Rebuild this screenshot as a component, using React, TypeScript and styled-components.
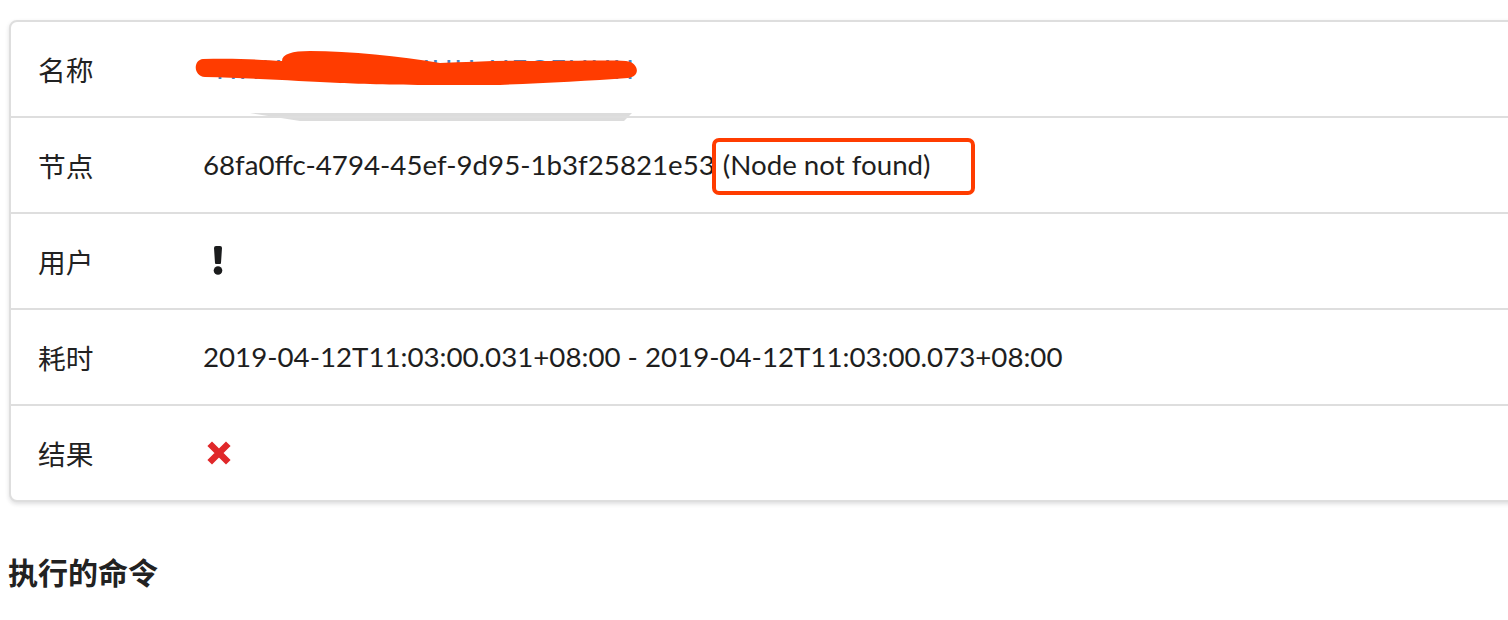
import React from "react";
import styled, { createGlobalStyle } from "styled-components";

const GlobalStyle = createGlobalStyle`
  html, body {
    margin: 0;
    padding: 0;
    background: #fff;
    overflow: hidden;
  }
  body {
    font-family: Lato, "Noto Sans CJK SC", sans-serif;
    color: rgba(0, 0, 0, 0.87);
  }
`;

const Page = styled.div`
  padding: 20px 0 0 9px;
  width: 1540px;
`;

const Card = styled.div`
  border: 2px solid #dedede;
  border-radius: 8px;
  box-shadow: 0 2px 4px 0 rgba(34, 36, 38, 0.15);
  background: #fff;
`;

const Row = styled.div`
  position: relative;
  display: grid;
  grid-template-columns: 192px 1fr;
  align-items: center;
  height: 94px;
  & + & {
    border-top: 2px solid #dedede;
  }
`;

const Label = styled.div`
  padding-left: 27px;
  font-size: 27.7px;
  font-family: Lato, "Noto Sans CJK SC", sans-serif;
  color: #222;
`;

const Value = styled.div`
  font-size: 27.7px;
  line-height: 36px;
  color: #1e1e1e;
  display: flex;
  align-items: center;
`;

const LinkText = styled.span`
  color: #4183c4;
  padding-left: 13px;
  letter-spacing: 1.5px;
`;

const Marked = styled.span`
  position: relative;
  margin-left: 8px;
  &::after {
    content: "";
    position: absolute;
    left: -11px;
    right: -44px;
    top: -9px;
    bottom: -12px;
    border: 4px solid #ff3c00;
    border-radius: 7px;
  }
`;

const Overlay = styled.svg`
  position: absolute;
  left: 0;
  top: 0;
  pointer-events: none;
`;

const Heading = styled.h4`
  margin: 51px 0 0 -1px;
  font-size: 30px;
  line-height: 36px;
  font-weight: 700;
  color: #222;
  font-family: "Noto Sans CJK SC", sans-serif;
`;

const Scribble = () => (
  <Overlay width="700" height="110" viewBox="11 22 700 110">
    <path d="M250 113 L632 113 L624 121 L300 121 Z" fill="#dcdcdc" />
    <path
      d="M203 59 C 240 58, 265 60, 282 61 C 282 54, 292 51, 310 51
         C 350 51, 400 56, 440 63 C 470 62, 500 60, 530 61
         C 570 61, 610 60, 626 61 C 638 62, 642 76, 628 78
         C 590 81, 540 83, 500 85 C 470 85, 450 85, 440 85
         C 400 85, 360 84, 340 83 C 300 81, 250 78, 205 77
         C 193 76, 193 60, 203 59 Z"
      fill="#ff3c00"
    />
  </Overlay>
);

const Exclaim = () => (
  <svg width="12" height="30" viewBox="0 0 12 30" style={{ marginLeft: 9 }}>
    <path d="M2 2 Q2 0 4 0 H8 Q10 0 10 2 L9 17 Q9 18 8 18 H4 Q3 18 3 17 Z" fill="#1b1c1d" />
    <circle cx="6" cy="24.5" r="4.3" fill="#1b1c1d" />
  </svg>
);

const Cross = () => (
  <svg width="24" height="24" viewBox="0 0 24 24" style={{ marginLeft: 4 }}>
    <path
      d="M5 5 L19 19 M19 5 L5 19"
      stroke="#e0282a"
      strokeWidth="6.5"
      strokeLinecap="square"
    />
  </svg>
);

export default function App() {
  return (
    <Page>
      <GlobalStyle />
      <Card>
        <Row>
          <Label>名称</Label>
          <Value>
            <LinkText>HHHHHH-HHHHH-HEGEHHH</LinkText>
          </Value>
          <Scribble />
        </Row>
        <Row>
          <Label>节点</Label>
          <Value>
            68fa0ffc-4794-45ef-9d95-1b3f25821e53
            <Marked>(Node not found)</Marked>
          </Value>
        </Row>
        <Row>
          <Label>用户</Label>
          <Value>
            <Exclaim />
          </Value>
        </Row>
        <Row>
          <Label>耗时</Label>
          <Value>2019-04-12T11:03:00.031+08:00 - 2019-04-12T11:03:00.073+08:00</Value>
        </Row>
        <Row>
          <Label>结果</Label>
          <Value>
            <Cross />
          </Value>
        </Row>
      </Card>
      <Heading>执行的命令</Heading>
    </Page>
  );
}
